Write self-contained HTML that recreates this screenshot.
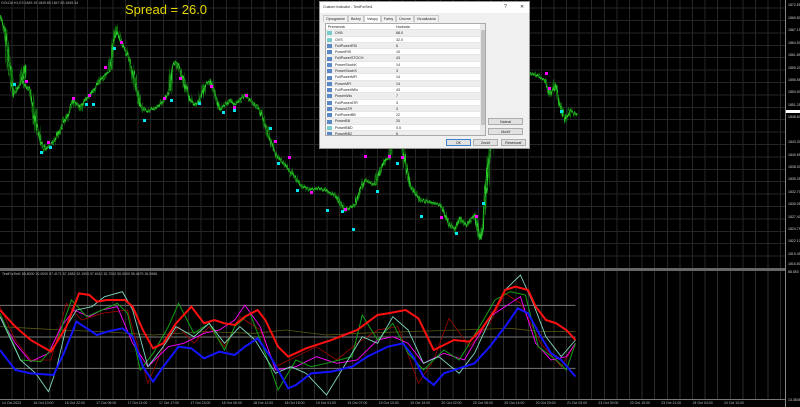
<!DOCTYPE html>
<html><head><meta charset="utf-8"><style>
*{margin:0;padding:0;box-sizing:border-box}
body{width:800px;height:407px;background:#000;overflow:hidden;position:relative;font-family:"Liberation Sans",sans-serif}
.grid{position:absolute;left:0;top:0;width:785px;height:268px;
background-image:repeating-linear-gradient(90deg,transparent 0 11.6px,#262626 11.6px 12.6px),repeating-linear-gradient(0deg,transparent 0 11.4px,#262626 11.4px 12.4px)}
.grid2{position:absolute;left:0;top:271px;width:785px;height:128px;
background-image:repeating-linear-gradient(90deg,transparent 0 11.6px,#2c2c2c 11.6px 12.6px)}
.ax{position:absolute;left:785px;top:0;width:1px;height:407px;background:#888}
.lbl{position:absolute;left:788px;font-size:3.5px;color:#ccc;white-space:nowrap}
.sep{position:absolute;left:0;top:268px;width:786px;height:3px;background:#666}
.spread{position:absolute;left:125px;top:2px;font-size:13px;color:#e6d800}
.info{position:absolute;left:1px;top:1px;font-size:3.5px;color:#bbb;white-space:nowrap}
.dlg{position:absolute;left:319px;top:1px;width:211px;height:148px;background:#f0f0f0;border:1px solid #999;font-size:3.6px;color:#222}
.tb{position:absolute;left:0;top:0;width:100%;height:11px;background:#fff}
.tabs{position:absolute;left:3px;top:13px;height:7px;display:flex;gap:0}
.tabs span{padding:1px 2px;border:1px solid #ccc;border-bottom:none;font-size:3.6px;background:#f0f0f0}
.tabs span.a{background:#fff}
.tbl{position:absolute;left:5px;top:21px;width:161px;height:113px;background:#fff;border:1px solid #aaa;overflow:hidden}
.row{height:6.3px;position:relative;font-size:3.6px;line-height:6.3px;border-bottom:1px solid #e6e6e6}
.row.g{background:#eee}
.row i{position:absolute;left:1px;top:1.2px;width:5px;height:4px;background:#5a87c6}
.row b{font-weight:normal;position:absolute;left:9px}
.row em{font-style:normal;position:absolute;left:70px}
.sb{position:absolute;right:0;top:0;width:5px;height:100%;background:#e8e8e8}
.sb div{position:absolute;left:0.5px;top:6px;width:4px;height:95px;background:#c2c2c2}
.btn{position:absolute;height:7px;background:#e1e1e1;border:1px solid #adadad;font-size:3.6px;text-align:center;line-height:6px}
.time{position:absolute;left:2px;top:401px;display:flex;font-size:3.5px;color:#bbb;white-space:nowrap}
.time span{width:31.4px;display:block}
</style></head><body>
<div class="grid"></div><div class="grid2"></div>
<div class="info">GOLD#,H1,E3 1849.19 1849.80 1847.83 1849.34</div>
<div class="spread">Spread = 26.0</div>
<svg width="800" height="407" style="position:absolute;left:0;top:0">
<defs>
<filter id="j" x="-5%" y="-20%" width="110%" height="140%"><feTurbulence type="fractalNoise" baseFrequency="0.6 0.02" numOctaves="2" seed="3"/><feDisplacementMap in="SourceGraphic" scale="9" xChannelSelector="R" yChannelSelector="G"/></filter>
<filter id="j2" x="-5%" y="-20%" width="110%" height="140%"><feTurbulence type="fractalNoise" baseFrequency="0.9 0.05" numOctaves="2" seed="7"/><feDisplacementMap in="SourceGraphic" scale="6" xChannelSelector="R" yChannelSelector="G"/></filter>
<polyline id="pl" fill="none" points="0,15 5,30 10,70 13,95 20,85 25,65 23,82 30,90 35,120 40,140 45,150 50,145 55,140 60,130 70,110 73,100 80,108 85,100 90,95 95,88 100,80 105,75 110,70 113,45 116,30 120,40 125,50 130,60 135,80 140,105 145,112 150,110 160,105 165,98 170,90 173,65 176,62 180,70 185,85 190,100 195,105 200,100 205,85 210,80 215,95 220,110 225,105 230,100 235,105 240,100 245,95 250,100 255,105 260,110 265,125 270,140 276,155 290,170 300,185 310,190 320,188 335,195 345,210 355,205 360,190 365,180 375,185 380,170 385,160 390,158 392,145 396,140 400,132 405,160 410,185 420,200 430,202 440,205 445,215 450,225 455,230 460,218 465,225 470,220 475,215 480,240 483,225 485,200 488,170 490,150 493,125 500,100 520,70 535,75 545,80 550,95 555,85 560,105 565,120 570,110 577,115"/>
</defs>
<use href="#pl" stroke="#0f6a0c" stroke-width="2.5" filter="url(#j)"/>
<use href="#pl" stroke="#14861a" stroke-width="1.5" filter="url(#j2)"/>
<use href="#pl" stroke="#2ed02a" stroke-width="1" filter="url(#j2)"/>
<g fill="#ff00ff"><rect x="25" y="80" width="3" height="3"/><rect x="47" y="141" width="3" height="3"/><rect x="72" y="97" width="3" height="3"/><rect x="88" y="94" width="3" height="3"/><rect x="104" y="66" width="3" height="3"/><rect x="120" y="41" width="3" height="3"/><rect x="179" y="77" width="3" height="3"/><rect x="163" y="97" width="3" height="3"/><rect x="210" y="85" width="3" height="3"/><rect x="245" y="94" width="3" height="3"/><rect x="233" y="106" width="3" height="3"/><rect x="274" y="140" width="3" height="3"/><rect x="288" y="156" width="3" height="3"/><rect x="310" y="191" width="3" height="3"/><rect x="344" y="208" width="3" height="3"/><rect x="364" y="155" width="3" height="3"/><rect x="388" y="155" width="3" height="3"/><rect x="401" y="156" width="3" height="3"/><rect x="440" y="216" width="3" height="3"/><rect x="475" y="215" width="3" height="3"/><rect x="545" y="72" width="3" height="3"/><rect x="548" y="87" width="3" height="3"/></g>
<g fill="#00e5f0"><rect x="13" y="83" width="3" height="3"/><rect x="40" y="151" width="3" height="3"/><rect x="49" y="146" width="3" height="3"/><rect x="85" y="103" width="3" height="3"/><rect x="92" y="103" width="3" height="3"/><rect x="113" y="47" width="3" height="3"/><rect x="143" y="119" width="3" height="3"/><rect x="170" y="99" width="3" height="3"/><rect x="198" y="102" width="3" height="3"/><rect x="222" y="111" width="3" height="3"/><rect x="233" y="109" width="3" height="3"/><rect x="269" y="127" width="3" height="3"/><rect x="277" y="162" width="3" height="3"/><rect x="296" y="189" width="3" height="3"/><rect x="326" y="209" width="3" height="3"/><rect x="341" y="210" width="3" height="3"/><rect x="352" y="228" width="3" height="3"/><rect x="376" y="190" width="3" height="3"/><rect x="396" y="162" width="3" height="3"/><rect x="420" y="215" width="3" height="3"/><rect x="455" y="232" width="3" height="3"/><rect x="482" y="202" width="3" height="3"/><rect x="560" y="110" width="3" height="3"/></g>
<g transform="translate(0,260) scale(0.5102,0.3333)" fill="none">
<line x1="0" y1="136" x2="1128" y2="136" stroke="#777" stroke-width="1" vector-effect="non-scaling-stroke"/>
<line x1="0" y1="231" x2="1128" y2="231" stroke="#777" stroke-width="1" vector-effect="non-scaling-stroke"/>
<line x1="0" y1="325" x2="1128" y2="325" stroke="#777" stroke-width="1" vector-effect="non-scaling-stroke"/>
<polyline stroke="#5a5a10" vector-effect="non-scaling-stroke" stroke-width="0.8" points="0,200 60,205 120,210 200,215 300,225 400,215 500,220 560,210 640,225 700,220 800,215 900,210 1000,205 1060,215 1128,215"/>
<polyline stroke="#a00000" vector-effect="non-scaling-stroke" stroke-width="0.8" points="0,140 30,240 60,300 100,300 130,130 160,180 200,160 250,150 290,370 320,260 350,200 380,250 410,200 440,260 470,170 510,210 540,320 580,290 620,260 660,300 700,250 740,210 780,200 820,370 850,300 880,175 920,260 960,190 990,100 1020,130 1060,250 1100,320 1128,250"/>
<polyline stroke="#ff00ff" vector-effect="non-scaling-stroke" stroke-width="0.9" points="0,170 30,250 60,305 95,280 120,200 145,150 175,170 200,150 230,140 260,250 290,320 330,260 360,250 400,220 430,210 460,180 480,135 510,200 540,330 580,320 620,290 660,310 700,300 740,240 770,230 800,250 830,310 870,280 910,300 960,170 990,140 1020,110 1050,250 1080,300 1110,290 1128,250"/>
<polyline stroke="#14a014" vector-effect="non-scaling-stroke" stroke-width="1" points="0,160 40,300 80,305 110,250 140,120 170,170 200,150 230,130 250,160 275,330 300,280 330,200 350,130 380,220 410,190 440,270 460,200 490,160 520,280 545,390 580,300 610,320 640,310 690,290 710,165 740,240 770,190 800,280 830,330 870,270 900,300 940,200 970,120 1000,95 1030,105 1055,260 1090,300 1110,330 1128,250"/>
<polyline stroke="#7fd8c0" vector-effect="non-scaling-stroke" stroke-width="0.9" points="0,170 40,300 70,340 95,395 110,330 130,200 150,150 180,140 205,110 240,95 260,150 290,320 320,260 345,200 380,230 410,190 440,250 470,200 500,240 540,340 570,320 600,340 640,405 670,330 710,230 740,250 770,170 800,210 830,310 860,290 900,340 930,280 960,180 990,90 1020,45 1045,130 1070,230 1100,290 1128,240"/>
<polyline stroke="#1414ff" vector-effect="non-scaling-stroke" stroke-width="2" points="0,270 30,330 60,340 105,345 125,280 150,185 175,210 190,225 210,215 240,205 260,230 280,320 300,365 320,320 350,260 375,265 400,295 430,275 460,285 480,260 505,235 530,290 565,385 580,375 610,340 650,335 690,320 720,290 760,260 790,250 810,290 830,350 850,375 870,340 900,325 930,310 960,260 990,200 1015,145 1035,160 1060,230 1080,280 1100,300 1128,350"/>
<polyline stroke="#ff1010" vector-effect="non-scaling-stroke" stroke-width="2" points="0,150 30,200 60,240 100,275 130,200 155,100 175,105 190,125 210,120 245,120 260,140 280,210 300,265 320,250 345,190 375,140 400,190 420,180 440,190 460,195 480,170 505,150 520,180 545,260 565,290 600,265 650,240 700,210 740,165 760,160 795,150 820,175 850,270 870,255 890,240 920,245 945,205 970,150 990,90 1010,80 1035,90 1050,140 1070,180 1090,190 1110,210 1128,240"/>
</g>
</svg>
<div class="sep"></div>
<div style="position:absolute;left:2px;top:272px;font-size:3.5px;color:#bbb;white-space:nowrap">TestForSet1 88.8000 10.0000 97.4171 57.1882 92.1993 97.6012 52.7002 50.0000 95.4679 26.5966</div>
<div style="position:absolute;left:0;top:399px;width:786px;height:1px;background:#777"></div>
<div class="time"><span>14 Oct 2023</span><span>16 Oct 10:00</span><span>16 Oct 22:00</span><span>17 Oct 05:00</span><span>17 Oct 11:00</span><span>17 Oct 17:00</span><span>17 Oct 23:00</span><span>18 Oct 06:00</span><span>18 Oct 12:00</span><span>18 Oct 18:00</span><span>19 Oct 01:00</span><span>19 Oct 07:00</span><span>19 Oct 13:00</span><span>19 Oct 19:00</span><span>20 Oct 02:00</span><span>20 Oct 08:00</span><span>20 Oct 14:00</span><span>20 Oct 20:00</span><span>21 Oct 03:00</span><span>23 Oct 09:00</span><span>23 Oct 15:00</span><span>23 Oct 21:00</span><span>24 Oct 04:00</span><span>24 Oct 10:00</span></div>
<div class="ax"></div>
<div class="lbl" style="top:3px">1872.65</div><div class="lbl" style="top:16px">1869.80</div><div class="lbl" style="top:28px">1867.15</div><div class="lbl" style="top:41px">1864.50</div><div class="lbl" style="top:53px">1861.85</div><div class="lbl" style="top:66px">1859.20</div><div class="lbl" style="top:78px">1856.55</div><div class="lbl" style="top:90px">1853.90</div><div class="lbl" style="top:103px">1851.25</div>
<div style="position:absolute;left:786px;top:110px;width:14px;height:3px;background:#fff"></div>
<div class="lbl" style="top:115px">1848.60</div><div class="lbl" style="top:140px">1843.30</div><div class="lbl" style="top:153px">1840.65</div><div class="lbl" style="top:165px">1838.00</div><div class="lbl" style="top:177px">1835.35</div><div class="lbl" style="top:190px">1832.70</div><div class="lbl" style="top:202px">1830.05</div><div class="lbl" style="top:215px">1827.40</div><div class="lbl" style="top:227px">1824.75</div><div class="lbl" style="top:239px">1822.10</div><div class="lbl" style="top:252px">1819.45</div><div class="lbl" style="top:262px">1816.80</div>
<div class="lbl" style="top:270px">88.653</div><div class="lbl" style="top:398px">13.3848</div>
<div class="dlg">
<div class="tb"><span style="position:absolute;left:3px;top:3px">Custom Indicator - TestForSet1</span><span style="position:absolute;left:184px;top:2px;font-size:5px">?</span><span style="position:absolute;left:200px;top:2px;font-size:5px">✕</span></div>
<div class="tabs"><span>Oprogramie</span><span>Bežný</span><span class="a">Vstupy</span><span>Farby</span><span>Úrovne</span><span>Vizualizácia</span></div>
<div class="tbl">
<div class="row"><b style="left:2px">Premenná</b><em>Hodnota</em></div>
<div class="row g"><i style="background:#7cc"></i><b>OVB</b><em>68.0</em></div>
<div class="row"><i style="background:#7cc"></i><b>OVS</b><em>32.0</em></div>
<div class="row g"><i></i><b>FullPowerRSI</b><em>6</em></div>
<div class="row"><i></i><b>PowerRSI</b><em>10</em></div>
<div class="row g"><i></i><b>FullPowerSTOCH</b><em>43</em></div>
<div class="row"><i></i><b>PowerStochK</b><em>14</em></div>
<div class="row g"><i></i><b>PowerStochS</b><em>3</em></div>
<div class="row"><i></i><b>FullPowerMFI</b><em>14</em></div>
<div class="row g"><i></i><b>PowerMFI</b><em>14</em></div>
<div class="row"><i></i><b>FullPowerWilo</b><em>43</em></div>
<div class="row g"><i></i><b>PowerWilo</b><em>7</em></div>
<div class="row"><i></i><b>FullPowerATR</b><em>3</em></div>
<div class="row g"><i></i><b>PowerATR</b><em>3</em></div>
<div class="row"><i></i><b>FullPowerBB</b><em>22</em></div>
<div class="row g"><i></i><b>PowerBB</b><em>20</em></div>
<div class="row"><i style="background:#7cc"></i><b>PowerBBD</b><em>0.5</em></div>
<div class="row g"><i></i><b>PowerBB2</b><em>6</em></div>
<div class="sb"><div></div></div>
</div>
<div class="btn" style="left:168px;top:116px;width:35px">Nahrat</div>
<div class="btn" style="left:168px;top:126px;width:35px">Uložiť</div>
<div class="btn" style="left:126px;top:137px;width:25px;border-color:#3c7fd1">OK</div>
<div class="btn" style="left:153px;top:137px;width:25px">Zrušiť</div>
<div class="btn" style="left:181px;top:137px;width:25px">Resetovať</div>
</div>
</body></html>
